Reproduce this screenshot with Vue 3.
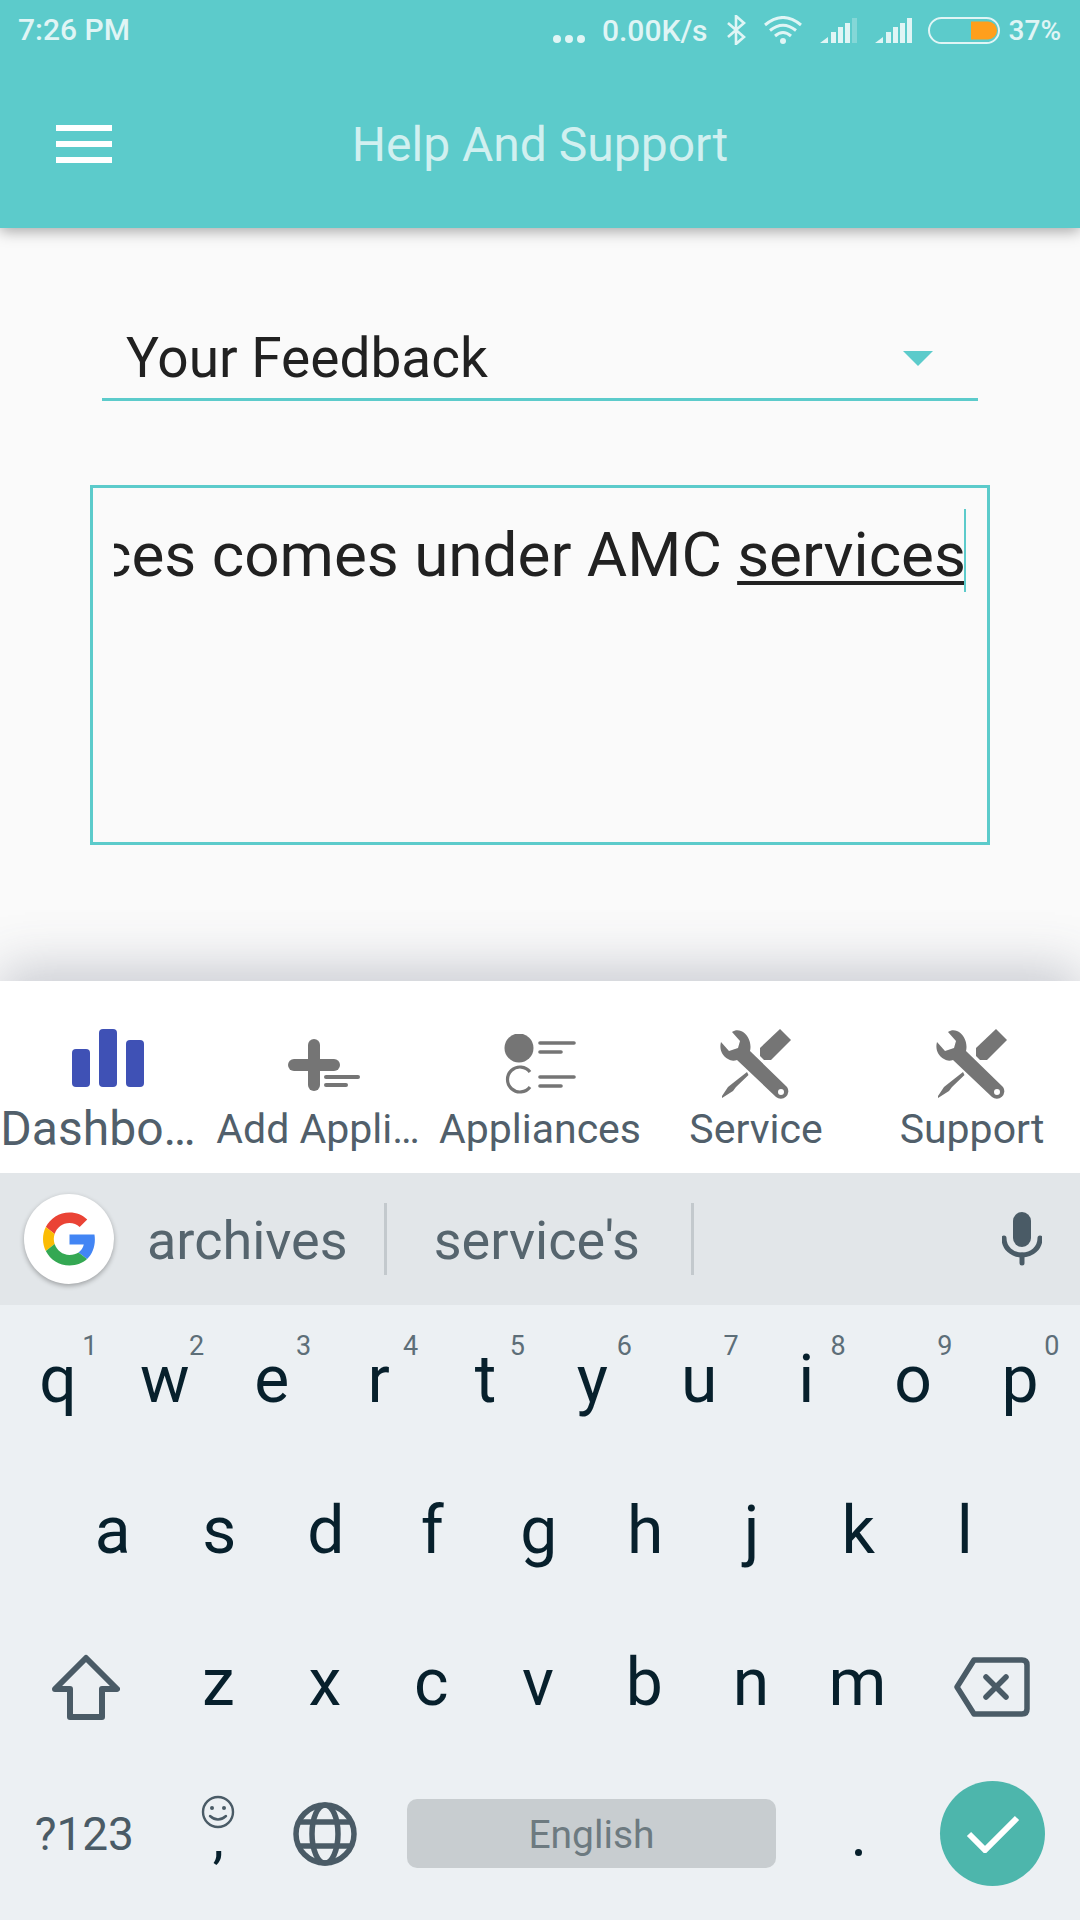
<script setup>
const navItems = [
  { label: 'Dashbo…', icon: 'bars', active: true, cls: 'shift-a' },
  { label: 'Add Appli…', icon: 'add', cls: 'shift-b' },
  { label: 'Appliances', icon: 'list' },
  { label: 'Service', icon: 'tools' },
  { label: 'Support', icon: 'tools' },
]
const row1 = [['q','1'],['w','2'],['e','3'],['r','4'],['t','5'],['y','6'],['u','7'],['i','8'],['o','9'],['p','0']]
const row2 = ['a','s','d','f','g','h','j','k','l']
const row3 = ['z','x','c','v','b','n','m']
</script>

<template>
  <div class="app">
    <header class="head">
      <div class="status">
        <span class="time">7:26 PM</span>
        <div class="status-right">
          <svg class="dots" width="44" height="10" viewBox="0 0 44 10"><circle cx="4" cy="5" r="4"/><circle cx="16" cy="5" r="4"/><circle cx="28" cy="5" r="4"/></svg>
          <span class="speed">0.00K/s</span>
          <svg class="bt" width="20" height="30" viewBox="0 0 20 30" fill="none"><path d="M2 8 L18 22 L10 29 V1 L18 8 L2 22" stroke="#e0f5f5" stroke-width="2.6"/></svg>
          <svg class="wifi" width="38" height="28" viewBox="0 0 38 28" fill="none" stroke="#e0f5f5" stroke-width="3">
            <path d="M1 9 Q19 -6 37 9"/><path d="M6 14.5 Q19 4 32 14.5"/><path d="M11 20 Q19 13 27 20"/>
            <circle cx="19" cy="25" r="3" fill="#e0f5f5" stroke="none"/>
          </svg>
          <svg class="sig" width="37" height="25" viewBox="0 0 37 25"><path d="M0 25 L8 19 V25Z M11 14 H16 V25 H11Z M18 9 H23 V25 H18Z M25 5 H30 V25 H25Z"/><path d="M32 0 H37 V25 H32Z" opacity=".3"/></svg>
          <svg class="sig sig2" width="37" height="25" viewBox="0 0 37 25"><path d="M0 25 L8 19 V25Z M11 14 H16 V25 H11Z M18 9 H23 V25 H18Z M25 5 H30 V25 H25Z M32 0 H37 V25 H32Z"/></svg>
          <svg class="bat" width="72" height="27" viewBox="0 0 72 27" fill="none">
            <rect x="1" y="1" width="70" height="25" rx="12.5" stroke="#e0f5f5" stroke-width="2"/>
            <path d="M43 4.5 H60 A9 9 0 0 1 60 22.5 H43Z" fill="#ff9f1c"/>
          </svg>
          <span class="pct">37%</span>
        </div>
      </div>
      <div class="toolbar">
        <div class="burger"><span></span><span></span><span></span></div>
        <h1 class="title">Help And Support</h1>
        <div></div>
      </div>
    </header>

    <main class="main">
      <div class="spinner">
        <span class="spinner-text">Your Feedback</span>
        <span class="arrow"></span>
      </div>
      <div class="box">
        <div class="line">
          <span class="typed">appliances comes under AMC <span class="comp">services</span></span>
        </div>
        <span class="cursor"></span>
      </div>
    </main>

    <nav class="nav">
      <div v-for="item in navItems" :key="item.label" class="nav-item" :class="{ active: item.active }">
        <div class="nav-icon">
          <svg v-if="item.icon === 'bars'" width="72" height="58" viewBox="0 0 72 58" fill="#3f51b5">
            <rect x="0" y="20" width="18" height="38" rx="4"/><rect x="27" y="0" width="18" height="58" rx="4"/><rect x="54" y="11" width="18" height="47" rx="4"/>
          </svg>
          <svg v-else-if="item.icon === 'add'" class="i-add" width="72" height="52" viewBox="0 0 72 52" fill="#757575">
            <rect x="20" y="0" width="12" height="52" rx="6"/><rect x="0" y="20" width="52" height="12" rx="6"/>
            <rect x="36" y="36" width="36" height="4" rx="2"/><rect x="36" y="44" width="24" height="4" rx="2"/>
          </svg>
          <svg v-else-if="item.icon === 'list'" class="i-list" width="72" height="62" viewBox="0 0 72 62" fill="none">
            <circle cx="15" cy="14" r="14.5" fill="#757575"/>
            <path d="M26 53 A12.5 12.5 0 1 1 26 38" stroke="#757575" stroke-width="3.2"/>
            <g stroke="#757575" stroke-width="3.6" stroke-linecap="round">
              <path d="M36 9 H70"/><path d="M36 18 H57"/><path d="M36 43 H70"/><path d="M36 52 H57"/>
            </g>
          </svg>
          <svg v-else width="72" height="70" viewBox="0 0 72 70" fill="#757575">
            <path fill-rule="evenodd" d="M12 3 L20 12 L18 19 L9 22 L1 13 C-1 20 2 27 8 30 C11 32 14 32 17 31 L56 68 A7.5 7.5 0 0 0 67 58 L30 22 C32 14 28 5 21 2 C18 1 15 1 12 3Z M61 60 A3 3 0 1 0 61 66 A3 3 0 1 0 61 60Z"/>
            <path d="M60 0 L71 11 L51 31 L44 31 L40 27 L40 19Z"/>
            <path d="M27 43 L28.5 46 L16 58 L13 62 L2 69 L2 67 L8 58 L13 54Z"/>
          </svg>
        </div>
        <span class="nav-label" :class="item.cls">{{ item.label }}</span>
      </div>
    </nav>

    <section class="keyboard">
      <div class="suggest">
        <div class="g-badge">
          <svg width="53" height="54" viewBox="0 0 48 48">
            <path fill="#EA4335" d="M24 9.5c3.54 0 6.71 1.22 9.21 3.6l6.85-6.85C35.9 2.38 30.47 0 24 0 14.62 0 6.51 5.38 2.56 13.22l7.98 6.19C12.43 13.72 17.74 9.5 24 9.5z"/>
            <path fill="#4285F4" d="M46.98 24.55c0-1.57-.15-3.09-.38-4.55H24v9.02h12.94c-.58 2.96-2.26 5.48-4.78 7.18l7.73 6c4.51-4.18 7.09-10.36 7.09-17.65z"/>
            <path fill="#FBBC05" d="M10.53 28.59c-.48-1.45-.76-2.99-.76-4.59s.27-3.14.76-4.59l-7.98-6.19C.92 16.46 0 20.12 0 24c0 3.88.92 7.54 2.56 10.78l7.97-6.19z"/>
            <path fill="#34A853" d="M24 48c6.48 0 11.93-2.13 15.89-5.81l-7.73-6c-2.15 1.45-4.92 2.3-8.16 2.3-6.26 0-11.57-4.22-13.47-9.91l-7.98 6.19C6.51 42.62 14.62 48 24 48z"/>
          </svg>
        </div>
        <span class="sug sug1">archives</span>
        <span class="divider div1"></span>
        <span class="sug">service's</span>
        <span class="divider div2"></span>
        <svg class="mic" width="40" height="54" viewBox="0 0 40 54" fill="none">
          <rect x="11" y="0" width="18" height="35" rx="9" fill="#4a5b66"/>
          <path d="M2 26 C2 36 10 43 20 43 C30 43 38 36 38 26" stroke="#4a5b66" stroke-width="5" stroke-linecap="round"/>
          <path d="M20 43 V51" stroke="#4a5b66" stroke-width="5" stroke-linecap="round"/>
        </svg>
      </div>

      <div class="row row-top">
        <div v-for="k in row1" :key="k[0]" class="key ltr top-ltr">{{ k[0] }}<span class="hint">{{ k[1] }}</span></div>
      </div>
      <div class="row row-inset">
        <div v-for="k in row2" :key="k" class="key ltr">{{ k }}</div>
      </div>
      <div class="row">
        <div class="key wide first-wide">
          <svg class="ic-shift" width="68" height="66" viewBox="0 0 68 66" fill="none"><path d="M34 4 L65 35 H50 V63 H18 V35 H3 Z" stroke="#4a5b66" stroke-width="6" stroke-linejoin="round"/></svg>
        </div>
        <div v-for="k in row3" :key="k" class="key ltr">{{ k }}</div>
        <div class="key wide">
          <svg class="ic-back" width="76" height="60" viewBox="0 0 76 60" fill="none" stroke="#4a5b66" stroke-width="5.5" stroke-linejoin="round" stroke-linecap="round"><path d="M3 30 L20 3 H68 Q73 3 73 8 V52 Q73 57 68 57 H20 Z"/><path d="M32 20 L52 40 M52 20 L32 40"/></svg>
        </div>
      </div>
      <div class="row bottom-row">
        <div class="key wide sym">?123</div>
        <div class="key comma-key">
          <svg width="34" height="34" viewBox="0 0 34 34" fill="none" stroke="#4a5b66" stroke-width="2.4"><circle cx="17" cy="17" r="15"/><circle cx="11" cy="13" r="2" fill="#4a5b66" stroke="none"/><circle cx="23" cy="13" r="2" fill="#4a5b66" stroke="none"/><path d="M9 21 Q17 28 25 21" stroke-linecap="round"/></svg>
          <span class="comma">,</span>
        </div>
        <div class="key">
          <svg width="66" height="66" viewBox="0 0 66 66" fill="none" stroke="#4a5b66" stroke-width="5.5"><circle cx="33" cy="33" r="29"/><ellipse cx="33" cy="33" rx="13" ry="29"/><path d="M7 21 H59 M7 45 H59"/></svg>
        </div>
        <div class="space"><span>English</span></div>
        <div class="key period"><span class="dot"></span></div>
        <div class="key wide">
          <div class="check">
            <svg width="54" height="38" viewBox="0 0 54 38" fill="none"><path d="M3 19 L19 35 L51 3" stroke="#fff" stroke-width="6"/></svg>
          </div>
        </div>
      </div>
    </section>
  </div>
</template>

<style>
html, body { margin: 0; padding: 0; }
</style>

<style scoped>
.app {
  width: 1080px;
  height: 1920px;
  display: flex;
  flex-direction: column;
  overflow: hidden;
  font-family: Roboto, "Noto Sans", sans-serif;
  background: #fafafa;
}
.head {
  height: 228px;
  flex: none;
  background: #5ccbcb;
  box-shadow: 0 3px 14px rgba(0, 0, 0, .35);
  position: relative;
  z-index: 2;
}
.status {
  height: 60px;
  display: flex;
  justify-content: space-between;
  align-items: center;
  padding: 0 19px 0 18px;
  color: #e0f5f5;
  font-size: 30px;
  font-weight: 500;
}
.time { line-height: 60px; }
.status-right { display: flex; align-items: center; }
.dots { fill: #e0f5f5; margin: 18px 0 0 0; }
.speed { margin-left: 5px; }
.bt { margin-left: 18px; }
.wifi { margin-left: 18px; }
.sig { fill: #e0f5f5; margin: 1px 0 0 18px; }
.sig2 { margin-left: 18px; }
.bat { margin-left: 16px; }
.pct { margin-left: 9px; font-size: 28px; }
.toolbar {
  height: 168px;
  display: grid;
  grid-template-columns: 1fr auto 1fr;
  align-items: center;
}
.burger {
  margin: 0 0 0 56px;
  display: flex;
  flex-direction: column;
  gap: 10px;
}
.burger span { display: block; width: 56px; height: 6px; background: #fff; }
.title {
  margin: 0;
  font-size: 48px;
  font-weight: 400;
  color: rgba(255, 255, 255, .72);
}
.main {
  flex: 1;
  min-height: 0;
  padding-top: 92px;
  box-sizing: border-box;
}
.spinner {
  height: 81px;
  margin: 0 102px;
  box-sizing: border-box;
  border-bottom: 3px solid #5ccbcb;
  display: flex;
  justify-content: space-between;
  align-items: center;
  padding: 0 45px 2px 24px;
}
.spinner-text { font-size: 55px; color: #212121; }
.arrow {
  width: 0;
  height: 0;
  border-left: 15px solid transparent;
  border-right: 15px solid transparent;
  border-top: 15px solid #5ccbcb;
}
.box {
  position: relative;
  margin: 84px 90px 0;
  height: 360px;
  box-sizing: border-box;
  border: 3px solid #5ccbcb;
  padding: 25px 21px 0;
}
.line {
  display: flex;
  justify-content: flex-end;
  overflow: hidden;
  white-space: nowrap;
  font-size: 62px;
  line-height: 83px;
  color: #212121;
}
.typed { flex: none; }
.comp {
  text-decoration: underline;
  text-decoration-thickness: 4px;
  text-underline-offset: 5px;
}
.cursor {
  position: absolute;
  right: 21px;
  top: 21px;
  width: 2px;
  height: 83px;
  background: #5ccbcb;
}
.nav {
  height: 192px;
  flex: none;
  background: #fff;
  display: flex;
  box-shadow: 0 -12px 50px rgba(70, 75, 100, .28);
  position: relative;
  z-index: 1;
}
.nav-item {
  width: 216px;
  position: relative;
  display: flex;
  flex-direction: column;
  align-items: center;
  color: #515f6b;
  font-size: 41px;
}
.nav-icon { height: 124px; box-sizing: border-box; padding-top: 48px; }
.i-add { margin-top: 10px; }
.i-list { margin-top: 5px; }
.nav-label { line-height: 48px; white-space: nowrap; }
.shift-a { margin-right: 20px; }
.shift-b { margin-right: 12px; }
.nav-item.active { font-size: 48px; }
.keyboard {
  height: 747px;
  flex: none;
  background: #ecf0f3;
  position: relative;
  z-index: 1;
  display: flex;
  flex-direction: column;
}
.suggest {
  height: 132px;
  flex: none;
  background: #e2e6e9;
  display: flex;
  align-items: center;
}
.g-badge {
  width: 90px;
  height: 90px;
  margin: 0 0 0 24px;
  border-radius: 50%;
  background: #fff;
  box-shadow: 0 2px 5px rgba(0, 0, 0, .3);
  display: flex;
  align-items: center;
  justify-content: center;
}
.sug { font-size: 54px; color: #56656e; padding-top: 2px; }
.sug1 { margin-left: 33px; }
.divider { width: 3px; height: 72px; background: #c3c9cd; }
.div1 { margin: 0 47px 0 36px; }
.div2 { margin-left: 51px; }
.mic { margin-left: auto; margin-right: 38px; }
.row {
  display: flex;
  height: 152px;
  flex: none;
  padding: 0 4px;
}
.row-top { padding: 0 4.5px; }
.row-inset { padding: 0 59.5px; }
.key {
  width: 107.2px;
  flex: none;
  position: relative;
  display: flex;
  align-items: center;
  justify-content: center;
  font-size: 66px;
  color: #07202c;
}
.ltr { width: 106.5px; box-sizing: border-box; padding-bottom: 5px; }
.top-ltr { width: 106.9px; padding-bottom: 3px; }
.wide { width: 160.6px; }
.first-wide { width: 161.15px; }
.ic-shift { margin: 3px 0 0 2px; }
.ic-back { margin: 4px 0 0 2px; }
.hint {
  position: absolute;
  top: 25px;
  right: 14px;
  font-size: 27px;
  color: #5d6e78;
}
.bottom-row { height: 145px; }
.sym { font-size: 46px; color: #4a5b66; }
.comma-key { flex-direction: column; box-sizing: border-box; padding-bottom: 16px; }
.comma { font-size: 56px; line-height: 30px; height: 34px; margin-top: -6px; }
.space {
  width: 369px;
  height: 69px;
  margin: 38px 0 0 28px;
  flex: none;
  background: #c8cdd0;
  border-radius: 10px;
  display: flex;
  align-items: center;
  justify-content: center;
  font-size: 39px;
  color: #6d7a80;
}
.space span { padding-top: 2px; }
.period { width: 136.5px; }
.dot { width: 7px; height: 7px; border-radius: 50%; background: #07202c; margin: 38px 0 0 28px; }
.check {
  width: 105px;
  height: 105px;
  border-radius: 50%;
  background: #4db6ac;
  display: flex;
  align-items: center;
  justify-content: center;
}
</style>
